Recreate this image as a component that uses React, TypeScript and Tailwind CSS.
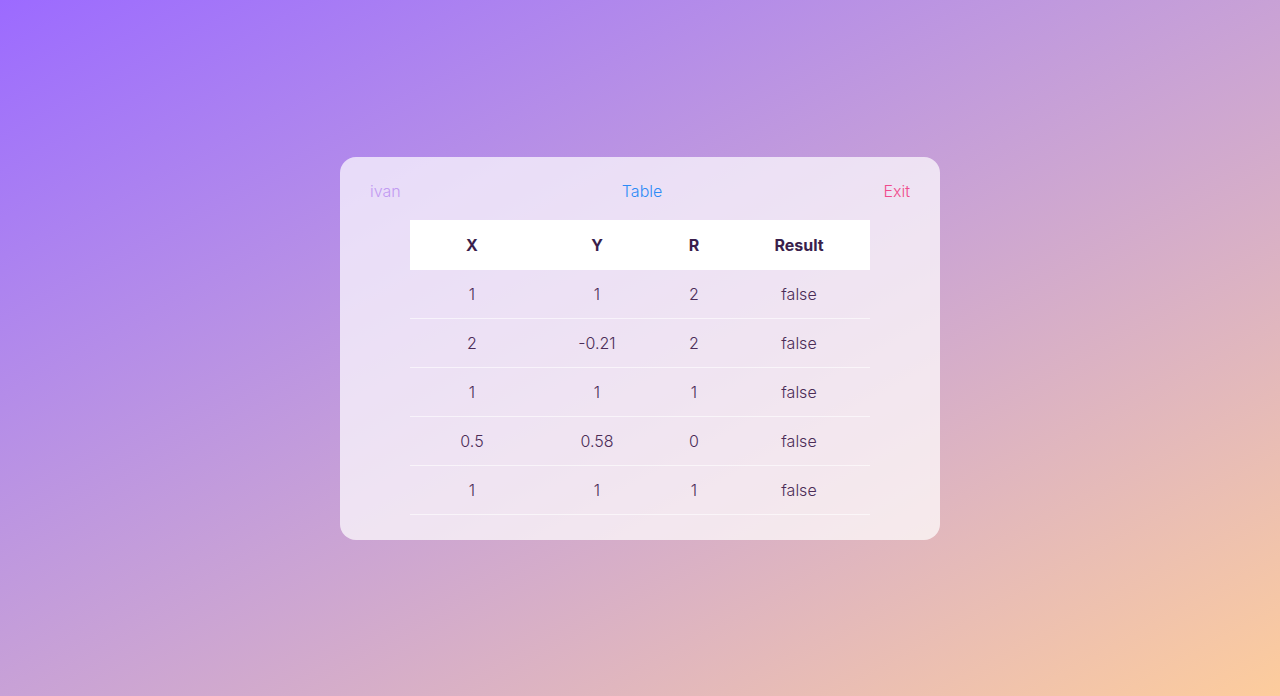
const rows = [
    { x: "1", y: "1", r: "2", result: "false" },
    { x: "2", y: "-0.21", r: "2", result: "false" },
    { x: "1", y: "1", r: "1", result: "false" },
    { x: "0.5", y: "0.58", r: "0", result: "false" },
    { x: "1", y: "1", r: "1", result: "false" },
];

export default function App() {
    return (
        <div className="flex items-center justify-center w-full h-[696px] bg-gradient-to-br from-[#9c6aff] to-[#fdcc9c] font-['Inter',sans-serif]">
            <div className="flex flex-col w-[600px] h-[383px] rounded-2xl bg-white/70 px-[30px] pt-[22px]">
                <div className="flex flex-row items-center justify-between h-6 text-base font-light">
                    <span className="text-[#c19af2]">ivan</span>
                    <span className="text-[#2d8bf6]">Table</span>
                    <span className="text-[#f04b8c]">Exit</span>
                </div>
                <table className="mt-[17px] mx-10 w-[460px] table-fixed border-collapse text-base font-light text-[#4b2c57]">
                    <colgroup>
                        <col className="w-[124px]" />
                        <col className="w-[126px]" />
                        <col className="w-[68px]" />
                        <col className="w-[142px]" />
                    </colgroup>
                    <thead>
                        <tr className="h-[50px] bg-white text-[#3a1f4c] font-semibold">
                            <th>X</th>
                            <th>Y</th>
                            <th>R</th>
                            <th>Result</th>
                        </tr>
                    </thead>
                    <tbody>
                        {rows.map((row, i) => (
                            <tr key={i} className="h-[49px] border-b border-white/60 text-center">
                                <td>{row.x}</td>
                                <td>{row.y}</td>
                                <td>{row.r}</td>
                                <td>{row.result}</td>
                            </tr>
                        ))}
                    </tbody>
                </table>
            </div>
        </div>
    );
}
